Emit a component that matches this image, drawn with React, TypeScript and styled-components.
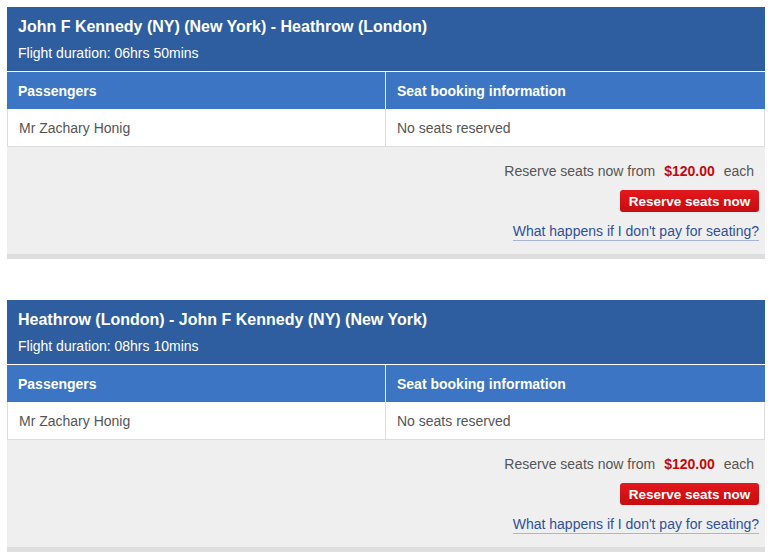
import styled, { createGlobalStyle } from 'styled-components';

const GlobalStyle = createGlobalStyle`
    body {
        margin: 0;
        background: #fff;
        font-family: "Liberation Sans", Arial, sans-serif;
    }
`;

interface Flight {
    route: string;
    duration: string;
    passenger: string;
    seats: string;
    price: string;
}

const flights: Flight[] = [
    {
        route: 'John F Kennedy (NY) (New York) - Heathrow (London)',
        duration: '06hrs 50mins',
        passenger: 'Mr Zachary Honig',
        seats: 'No seats reserved',
        price: '$120.00',
    },
    {
        route: 'Heathrow (London) - John F Kennedy (NY) (New York)',
        duration: '08hrs 10mins',
        passenger: 'Mr Zachary Honig',
        seats: 'No seats reserved',
        price: '$120.00',
    },
];

const FlightCard = function ({ flight }: { flight: Flight }) {
    return (
        <Card>
            <CardHeader>
                <Route>{flight.route}</Route>
                <Duration>Flight duration: {flight.duration}</Duration>
            </CardHeader>
            <Table>
                <HeadCell>Passengers</HeadCell>
                <HeadCell $last>Seat booking information</HeadCell>
                <BodyCell>{flight.passenger}</BodyCell>
                <BodyCell $last>{flight.seats}</BodyCell>
            </Table>
            <Footer>
                <PriceLine>
                    Reserve seats now from <Price>{flight.price}</Price> each
                </PriceLine>
                <ReserveButton type="button">Reserve seats now</ReserveButton>
                <HelpLink href="#">What happens if I don't pay for seating?</HelpLink>
            </Footer>
        </Card>
    );
};

export default function App() {
    return (
        <>
            <GlobalStyle />
            <Page>
                {flights.map((f, i) => (
                    <FlightCard key={i} flight={f} />
                ))}
            </Page>
        </>
    );
}

const Page = styled.div`
    display: flex;
    flex-direction: column;
    gap: 41px;
    padding: 7px 7px 0 7px;
    width: 758px;
`;

const Card = styled.section`
    display: flex;
    flex-direction: column;
    border-bottom: 5px solid #dedede;
`;

const CardHeader = styled.div`
    background: #2e5e9f;
    color: #fff;
    height: 65px;
    box-sizing: border-box;
    padding: 10px 11px 0;
    border-bottom: 1px solid #fff;
`;

const Route = styled.div`
    font-size: 16px;
    font-weight: bold;
    line-height: 20px;
`;

const Duration = styled.div`
    font-size: 14px;
    line-height: 18px;
    margin-top: 7px;
`;

const Table = styled.div`
    display: grid;
    grid-template-columns: 378px 1fr;
`;

const HeadCell = styled.div<{ $last?: boolean }>`
    background: #3b75c3;
    color: #fff;
    font-size: 14px;
    font-weight: bold;
    height: 37px;
    line-height: 38px;
    padding-left: 11px;
    border-left: ${({ $last }) => ($last ? '1px solid #e4ebf5' : 'none')};
`;

const BodyCell = styled.div<{ $last?: boolean }>`
    background: #fff;
    color: #555;
    font-size: 14px;
    height: 37px;
    line-height: 38px;
    padding-left: 11px;
    border-bottom: 1px solid #dcdcdc;
    border-left: 1px solid #dcdcdc;
    border-right: ${({ $last }) => ($last ? '1px solid #dcdcdc' : 'none')};
`;

const Footer = styled.div`
    background: #efefef;
    display: flex;
    flex-direction: column;
    align-items: flex-end;
    padding: 15px 6px 0 0;
    height: 107px;
    box-sizing: border-box;
`;

const PriceLine = styled.div`
    color: #555;
    font-size: 14px;
    line-height: 18px;
    padding-right: 5px;
`;

const Price = styled.span`
    color: #c10a0f;
    font-weight: bold;
    margin: 0 5px;
`;

const ReserveButton = styled.button`
    margin-top: 10px;
    width: 139px;
    height: 22px;
    border: none;
    border-radius: 3px;
    background: linear-gradient(#e3181c, #c70c10);
    color: #fff;
    font-family: "Liberation Sans", Arial, sans-serif;
    font-size: 13.5px;
    font-weight: bold;
    padding: 0;
    cursor: pointer;
`;

const HelpLink = styled.a`
    margin-top: 10px;
    color: #2f4f9c;
    font-size: 14px;
    line-height: 18px;
    text-decoration: none;
    border-bottom: 1px solid #a9b5d3;
`;
